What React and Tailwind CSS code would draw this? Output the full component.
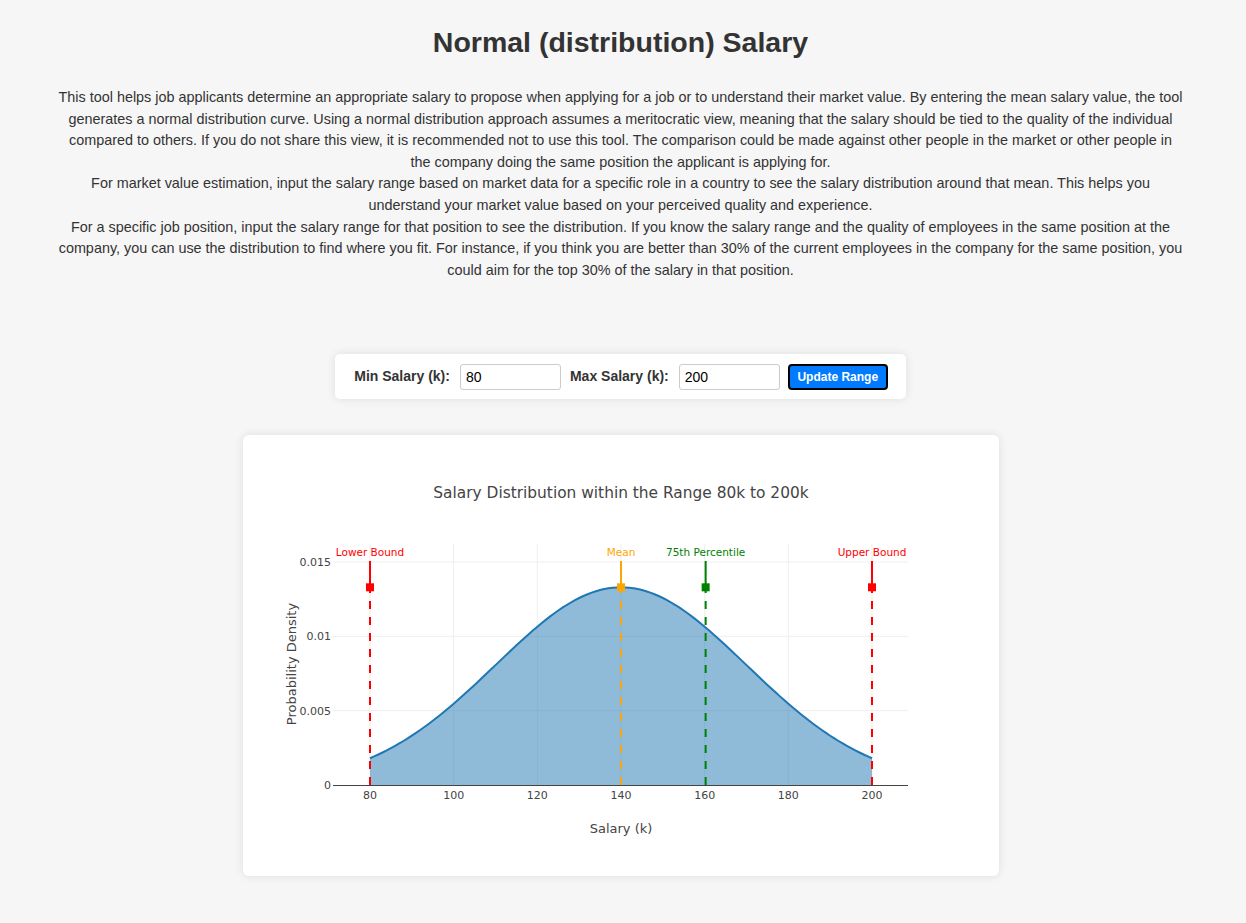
import React from 'react';

const MEAN = 140;
const STD = 30;
const MIN = 80;
const MAX = 200;

const xs = (v) => 127 + (v - 80) * 4.1833;
const ys = (d) => 350 - d * 14866;
const pdf = (v) => Math.exp(-0.5 * ((v - MEAN) / STD) ** 2) / (STD * Math.sqrt(2 * Math.PI));

const markers = [
    { label: 'Lower Bound', value: MIN, color: '#ff0000' },
    { label: 'Mean', value: MEAN, color: '#ffa500' },
    { label: '75th Percentile', value: MEAN + 0.6745 * STD, color: '#008000' },
    { label: 'Upper Bound', value: MAX, color: '#ff0000' },
];

const Chart = () => {
    const points = [];
    for (let v = MIN; v <= MAX; v += 1) {
        points.push([xs(v), ys(pdf(v))]);
    }
    const line = points.map(([x, y], i) => `${i === 0 ? 'M' : 'L'}${x.toFixed(2)},${y.toFixed(2)}`).join(' ');
    const area = `${line} L${xs(MAX).toFixed(2)},350 L${xs(MIN).toFixed(2)},350 Z`;
    const peakY = ys(pdf(MEAN));
    const font = "'DejaVu Sans', Verdana, sans-serif";

    return (
        <svg width="756" height="441" viewBox="0 0 756 441" className="block" style={{ fontFamily: font }}>
            <text x="378" y="63" textAnchor="middle" fontSize="15.4" fill="#444">
                Salary Distribution within the Range 80k to 200k
            </text>

            {/* grid */}
            {[80, 100, 120, 140, 160, 180, 200].map((v) => (
                <line key={v} x1={xs(v)} x2={xs(v)} y1="109" y2="350" stroke="#eee" strokeWidth="1" />
            ))}
            {[0.005, 0.01, 0.015].map((d) => (
                <line key={d} x1="90" x2="665" y1={ys(d)} y2={ys(d)} stroke="#eee" strokeWidth="1" />
            ))}

            {/* curve */}
            <path d={area} fill="#1f77b4" fillOpacity="0.5" />
            <path d={line} fill="none" stroke="#1f77b4" strokeWidth="2" />

            {/* axis */}
            <line x1="90" x2="665" y1="350.5" y2="350.5" stroke="#444" strokeWidth="1" />

            {[0, 0.005, 0.01, 0.015].map((d) => (
                <text key={d} x="88" y={ys(d) + 4} textAnchor="end" fontSize="11" fill="#444">
                    {d === 0 ? '0' : String(d)}
                </text>
            ))}
            {[80, 100, 120, 140, 160, 180, 200].map((v) => (
                <text key={v} x={xs(v)} y="364" textAnchor="middle" fontSize="11" fill="#444">
                    {v}
                </text>
            ))}

            <text x="378" y="398" textAnchor="middle" fontSize="13" fill="#444">
                Salary (k)
            </text>
            <text x="53" y="229" textAnchor="middle" fontSize="13" fill="#444" transform="rotate(-90 53 229)">
                Probability Density
            </text>

            {/* reference lines */}
            {markers.map((m) => {
                const x = xs(m.value);
                return (
                    <g key={m.label}>
                        <line x1={x} x2={x} y1="350" y2={peakY} stroke={m.color} strokeWidth="2" strokeDasharray="8,8" />
                        <line x1={x} x2={x} y1={peakY} y2="126" stroke={m.color} strokeWidth="2" />
                        <rect x={x - 4} y={peakY - 4} width="8" height="8" fill={m.color} />
                        <text x={x} y="121" textAnchor="middle" fontSize="10.5" fill={m.color}>
                            {m.label}
                        </text>
                    </g>
                );
            })}
        </svg>
    );
};

const App = () => {
    return (
        <div className="min-h-screen bg-[#f6f6f6] text-[#333] font-['Liberation_Sans',Arial,sans-serif]">
            <div className="w-[1241px] pt-[25px] pb-[47px]">
                <h1 className="text-center text-[28.5px] font-bold leading-[34px]">Normal (distribution) Salary</h1>
                <p className="mx-auto mt-[28px] w-[1125px] text-center text-[14.4px] leading-[1.5]">
                    This tool helps job applicants determine an appropriate salary to propose when applying for a job or to understand their market value. By entering the mean salary value, the tool generates a normal distribution curve. Using a normal distribution approach assumes a meritocratic view, meaning that the salary should be tied to the quality of the individual compared to others. If you do not share this view, it is recommended not to use this tool. The comparison could be made against other people in the market or other people in the company doing the same position the applicant is applying for.
                    <br />
                    For market value estimation, input the salary range based on market data for a specific role in a country to see the salary distribution around that mean. This helps you understand your market value based on your perceived quality and experience.
                    <br />
                    For a specific job position, input the salary range for that position to see the distribution. If you know the salary range and the quality of employees in the same position at the company, you can use the distribution to find where you fit. For instance, if you think you are better than 30% of the current employees in the company for the same position, you could aim for the top 30% of the salary in that position.
                </p>

                <div className="mt-[73px] flex justify-center">
                    <div className="flex h-[45px] items-center rounded-[5px] bg-white pl-[19px] pr-[18px] shadow-[0_0_10px_rgba(0,0,0,0.1)]">
                        <label className="mr-[10px] text-[14px] font-bold">Min Salary (k):</label>
                        <input
                            type="text"
                            defaultValue="80"
                            className="mr-[9px] h-[26px] w-[101px] rounded-[3px] border border-[#ccc] bg-white px-[5px] text-[14px] text-black outline-none"
                        />
                        <label className="mr-[10px] text-[14px] font-bold">Max Salary (k):</label>
                        <input
                            type="text"
                            defaultValue="200"
                            className="mr-[8px] h-[26px] w-[101px] rounded-[3px] border border-[#ccc] bg-white px-[5px] text-[14px] text-black outline-none"
                        />
                        <button className="h-[26px] w-[100px] rounded-[4px] border-2 border-black bg-[#007bff] text-[12px] font-bold text-white">
                            Update Range
                        </button>
                    </div>
                </div>

                <div className="mt-[36px] flex justify-center">
                    <div className="w-[756px] rounded-[6px] bg-white shadow-[0_0_10px_rgba(0,0,0,0.1)]">
                        <Chart />
                    </div>
                </div>
            </div>
        </div>
    );
};

export default App;
